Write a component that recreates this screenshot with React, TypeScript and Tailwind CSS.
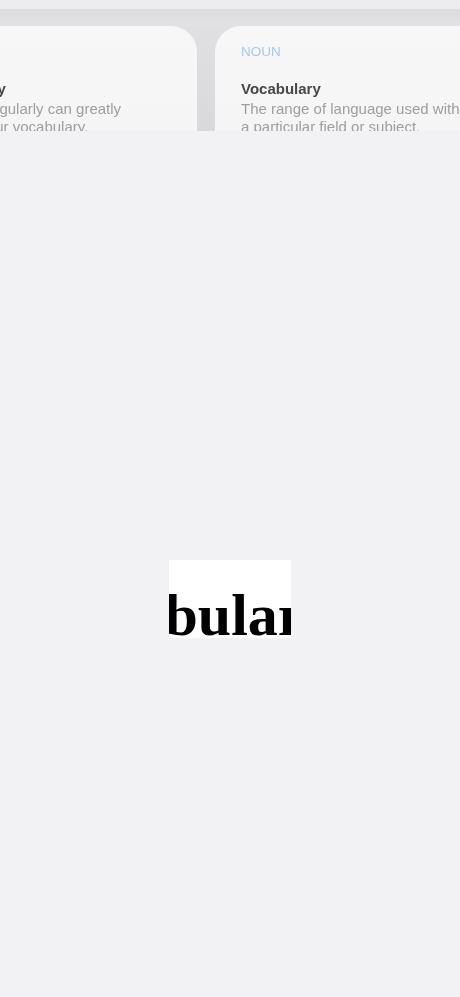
const sans = "font-['Liberation_Sans',Arial,sans-serif]";

function Card({
  className,
  children,
}: {
  className?: string;
  children: React.ReactNode;
}) {
  return (
    <div
      className={`w-[297px] shrink-0 rounded-t-[26px] bg-gradient-to-b from-[#f7f7f8] to-[#f4f4f5] px-[26px] pt-[17px] ${className ?? ""}`}
    >
      {children}
    </div>
  );
}

export default function App() {
  return (
    <div className={`flex min-h-[997px] w-[460px] flex-col bg-[#f2f2f4] ${sans}`}>
      {/* blurred page behind the sheet */}
      <div className="h-[131px] overflow-hidden bg-[#e6e6e8]">
        <div className="blur-[0.7px]">
          <div className="h-[9px] bg-[#ededef]" />
          <div className="h-[17px] bg-gradient-to-b from-[#dcdcde] to-[#e2e2e4]" />
          <div className="flex gap-[18px] bg-gradient-to-b from-[#e0e0e2] to-[#d6d6d8]">
            <Card className="ml-[-100px]">
              <p className="text-[13.5px] leading-[18px] text-[#a9c7ee]">NOUN</p>
              <p className="mt-[19px] text-[15px] font-semibold leading-[18px] text-[#48484a]">
                Vocabulary
              </p>
              <p className="mt-[2px] whitespace-nowrap text-[15px] leading-[18px] text-[#9e9ea0]">
                Reading regularly can greatly
                <br />
                expand your vocabulary.
              </p>
              <div className="h-[40px]" />
            </Card>
            <Card>
              <p className="text-[13.5px] leading-[18px] text-[#a9c7ee]">NOUN</p>
              <p className="mt-[19px] text-[15px] font-semibold leading-[18px] text-[#48484a]">
                Vocabulary
              </p>
              <p className="mt-[2px] whitespace-nowrap text-[15px] leading-[18px] text-[#9e9ea0]">
                The range of language used within
                <br />
                a particular field or subject.
              </p>
              <div className="h-[40px]" />
            </Card>
          </div>
        </div>
      </div>

      {/* sheet */}
      <div className="flex flex-1 justify-center bg-[#f2f2f4] pt-[429px]">
        <div className="h-[78px] w-[122px] overflow-hidden bg-white pt-[25px]">
          <p className="ml-[-129px] whitespace-nowrap font-['Liberation_Serif','Times_New_Roman',serif] text-[60px] font-bold leading-[60px] text-black">
            Vocabulary
          </p>
        </div>
      </div>
    </div>
  );
}
